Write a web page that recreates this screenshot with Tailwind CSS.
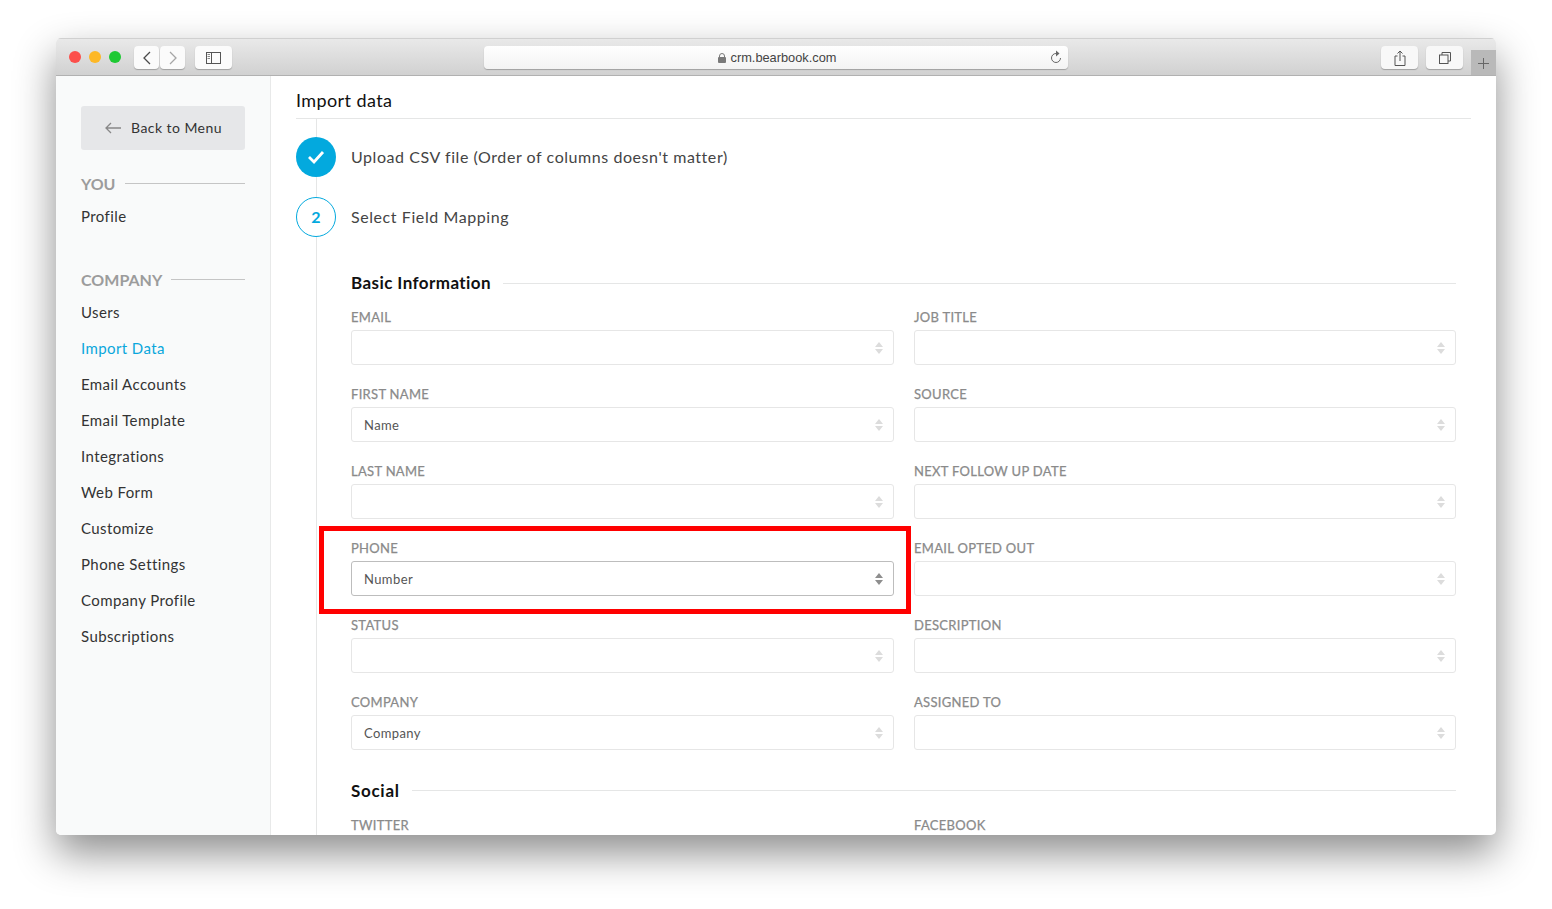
<!DOCTYPE html>
<html lang="en">
<head>
    <meta charset="UTF-8">
    <title>Import data</title>
    <script src="https://cdn.jsdelivr.net/npm/@tailwindcss/browser@4"></script>
</head>
<body class="bg-white h-[909px] overflow-hidden pt-[38px] pl-[56px] font-['Lato',sans-serif]">
<div class="w-[1440px] h-[797px] rounded-[5px] overflow-hidden flex flex-col bg-white shadow-[0_18px_40px_rgba(0,0,0,0.45)]">

    <!-- browser toolbar -->
    <div class="h-[38px] shrink-0 flex items-start bg-gradient-to-b from-[#e9e9e9] to-[#d1d1d1] border-t border-t-[#d0d0d0] border-b border-b-[#b1b1b1] pl-[13px]">
        <div class="flex gap-2 mt-[12px]">
            <span class="w-3 h-3 rounded-full bg-[#fc4f4b]"></span>
            <span class="w-3 h-3 rounded-full bg-[#fdb826]"></span>
            <span class="w-3 h-3 rounded-full bg-[#1ec933]"></span>
        </div>
        <div class="flex gap-px ml-[13px] mt-[7px]">
            <div class="w-[25px] h-[23px] rounded-[4px] bg-[#fbfbfb] shadow-[0_1px_1px_rgba(0,0,0,0.25)] flex items-center justify-center">
                <svg width="10" height="14" viewBox="0 0 10 14" fill="none" stroke="#4a4a4a" stroke-width="1.3"><path d="M8 1 2 7l6 6"/></svg>
            </div>
            <div class="w-[25px] h-[23px] rounded-[4px] bg-[#fbfbfb] shadow-[0_1px_1px_rgba(0,0,0,0.25)] flex items-center justify-center">
                <svg width="10" height="14" viewBox="0 0 10 14" fill="none" stroke="#a6a6a6" stroke-width="1.3"><path d="m2 1 6 6-6 6"/></svg>
            </div>
        </div>
        <div class="w-[37px] h-[23px] ml-[10px] mt-[7px] rounded-[4px] bg-[#fbfbfb] shadow-[0_1px_1px_rgba(0,0,0,0.25)] flex items-center justify-center">
            <svg width="15" height="12" viewBox="0 0 15 12" fill="none" stroke="#555" stroke-width="1"><rect x="0.5" y="0.5" width="14" height="11"/><path d="M5.5 0.5v11"/><path d="M1.5 2.5h2.5M1.5 4.5h2.5M1.5 6.5h2.5" stroke="#888"/></svg>
        </div>
        <div class="w-[584px] h-[23px] ml-[252px] mt-[7px] rounded-[4px] bg-gradient-to-b from-[#ffffff] to-[#f3f3f3] shadow-[0_1px_1px_rgba(0,0,0,0.25)] flex items-center justify-center relative">
            <svg width="8" height="10" viewBox="0 0 8 10" fill="#7a7a7a" class="mr-[5px] ml-[2px]"><rect y="4" width="8" height="6" rx="1"/><path d="M1.5 4.5V3a2.5 2.5 0 0 1 5 0v1.500" fill="none" stroke="#7a7a7a" stroke-width="1"/></svg>
            <span class="text-[12.8px] leading-none pt-px text-[#444] font-['Liberation_Sans',sans-serif]">crm.bearbook.com</span>
            <svg width="12" height="14" viewBox="0 0 12 14" fill="none" stroke="#666" stroke-width="1" class="absolute right-[6px] top-[4px]"><path d="M6 3.500A4.500 4.500 0 1 0 10.500 8"/><path d="M6 0.500 9.500 3.500 6 6.500z" fill="#666" stroke="none"/></svg>
        </div>
        <div class="w-[37px] h-[23px] ml-[313px] mt-[7px] rounded-[4px] bg-[#f8f8f8] shadow-[0_1px_1px_rgba(0,0,0,0.25)] flex items-center justify-center">
            <svg width="12" height="16" viewBox="0 0 12 16" fill="none" stroke="#555" stroke-width="1"><path d="M3.500 6H1v9.500h10V6H8.500"/><path d="M6 11V1M3.500 3.500 6 1l2.500 2.500"/></svg>
        </div>
        <div class="w-[37px] h-[23px] ml-2 mt-[7px] rounded-[4px] bg-[#f8f8f8] shadow-[0_1px_1px_rgba(0,0,0,0.25)] flex items-center justify-center">
            <svg width="12" height="12" viewBox="0 0 12 12" fill="none" stroke="#555" stroke-width="1"><rect x="0.500" y="3" width="8.500" height="8.500"/><path d="M3 3V0.500h8.500V9H9"/></svg>
        </div>
        <div class="w-[25px] h-[25px] ml-2 mt-[11px] pt-px bg-[#b9b9b9] flex items-center justify-center">
            <svg width="11" height="11" viewBox="0 0 11 11" stroke="#666" stroke-width="1"><path d="M5.500 0v11M0 5.500h11"/></svg>
        </div>
    </div>

    <div class="flex flex-1 min-h-0">
        <!-- sidebar -->
        <aside class="w-[215px] shrink-0 bg-[#f9fafa] border-r border-[#e8e9e9] px-[25px] pt-[30px] text-[15px] tracking-[0.4px] text-[#333]">
            <div class="w-[164px] h-[44px] rounded-[3px] bg-[#e6e7e9] flex items-center pl-[24px] pb-[2px] gap-[10px] text-[14px] tracking-[0.45px] text-[#333]">
                <svg class="mt-[2px]" width="16" height="12" viewBox="0 0 16 12" fill="none" stroke="#888" stroke-width="1.3"><path d="M16 6H1M6 1 1 6l5 5"/></svg>
                Back to Menu
            </div>
            <div class="flex items-center gap-[9px] mt-[24px] h-[20px] text-[#9c9c9c] text-[16px] tracking-normal">
                <span class="font-bold">YOU</span><span class="flex-1 border-t border-[#c5c5c5] mb-[2px]"></span>
            </div>
            <div class="h-[36px] mt-[4px] flex items-center">Profile</div>
            <div class="flex items-center gap-[9px] mt-[36px] h-[20px] text-[#9c9c9c] text-[16px] tracking-normal">
                <span class="font-bold">COMPANY</span><span class="flex-1 border-t border-[#c5c5c5] mb-[2px]"></span>
            </div>
            <nav class="flex flex-col mt-[4px]">
                <a class="h-[36px] flex items-center">Users</a>
                <a class="h-[36px] flex items-center text-[#0aa7dc]">Import Data</a>
                <a class="h-[36px] flex items-center">Email Accounts</a>
                <a class="h-[36px] flex items-center">Email Template</a>
                <a class="h-[36px] flex items-center">Integrations</a>
                <a class="h-[36px] flex items-center">Web Form</a>
                <a class="h-[36px] flex items-center">Customize</a>
                <a class="h-[36px] flex items-center">Phone Settings</a>
                <a class="h-[36px] flex items-center">Company Profile</a>
                <a class="h-[36px] flex items-center">Subscriptions</a>
            </nav>
        </aside>

        <!-- main -->
        <main class="flex-1 min-w-0 overflow-hidden pl-[25px] pr-[25px] relative">
            <h1 class="h-[43px] pt-[14px] text-[18px] leading-[20px] tracking-[0.4px] text-[#111] border-b border-[#e5e6e6]">Import data</h1>
            <div class="ml-[20px] border-l border-[#e5e6e6] pl-[34px] pr-[15px] pt-[18px] h-[800px]">
                <div class="flex items-center -ml-[55px] gap-[15px]">
                    <span class="w-[40px] h-[40px] rounded-full bg-[#03a9de] flex items-center justify-center">
                        <svg width="18" height="14" viewBox="0 0 18 14" fill="none" stroke="#fff" stroke-width="2.800"><path d="m2 7 5 5 9-10"/></svg>
                    </span>
                    <span class="text-[16px] tracking-[0.56px] text-[#444]">Upload CSV file (Order of columns doesn't matter)</span>
                </div>
                <div class="flex items-center -ml-[55px] gap-[15px] mt-[20px]">
                    <span class="w-[40px] h-[40px] rounded-full bg-white border border-[#03a9de] flex items-center justify-center text-[#03a9de] text-[16px] font-bold">2</span>
                    <span class="text-[16px] tracking-[0.58px] text-[#444]">Select Field Mapping</span>
                </div>

                <div class="flex items-center gap-[12px] mt-[36px] h-[20px]">
                    <h2 class="text-[17px] font-bold tracking-[0.42px] text-[#111]">Basic Information</h2><span class="flex-1 border-t border-[#e5e6e6]"></span>
                </div>
                <div class="grid grid-cols-[543px_542px] gap-x-[20px] gap-y-[22px] mt-[17px]">
                    <div><label class="block h-5 text-[13px] leading-[14px] tracking-[0.3px] [-webkit-text-stroke:0.25px_#8a8a8a] text-[#8a8a8a]">EMAIL</label><div class="h-[35px] rounded-[3px] border border-[#e6e6e6] flex items-center justify-between pl-3 pr-[10px] text-[13px] tracking-[0.4px] text-[#555]"><span class="pt-[2px]"></span><svg width="8" height="12" viewBox="0 0 8 12" fill="#dcdcdc"><path d="M4 0 8 5H0zM4 12 0 7h8z"/></svg></div></div>
                    <div><label class="block h-5 text-[13px] leading-[14px] tracking-[0.3px] [-webkit-text-stroke:0.25px_#8a8a8a] text-[#8a8a8a]">JOB TITLE</label><div class="h-[35px] rounded-[3px] border border-[#e6e6e6] flex items-center justify-between pl-3 pr-[10px] text-[13px] tracking-[0.4px] text-[#555]"><span class="pt-[2px]"></span><svg width="8" height="12" viewBox="0 0 8 12" fill="#dcdcdc"><path d="M4 0 8 5H0zM4 12 0 7h8z"/></svg></div></div>
                    <div><label class="block h-5 text-[13px] leading-[14px] tracking-[0.3px] [-webkit-text-stroke:0.25px_#8a8a8a] text-[#8a8a8a]">FIRST NAME</label><div class="h-[35px] rounded-[3px] border border-[#e6e6e6] flex items-center justify-between pl-3 pr-[10px] text-[13px] tracking-[0.4px] text-[#555]"><span class="pt-[2px]">Name</span><svg width="8" height="12" viewBox="0 0 8 12" fill="#dcdcdc"><path d="M4 0 8 5H0zM4 12 0 7h8z"/></svg></div></div>
                    <div><label class="block h-5 text-[13px] leading-[14px] tracking-[0.3px] [-webkit-text-stroke:0.25px_#8a8a8a] text-[#8a8a8a]">SOURCE</label><div class="h-[35px] rounded-[3px] border border-[#e6e6e6] flex items-center justify-between pl-3 pr-[10px] text-[13px] tracking-[0.4px] text-[#555]"><span class="pt-[2px]"></span><svg width="8" height="12" viewBox="0 0 8 12" fill="#dcdcdc"><path d="M4 0 8 5H0zM4 12 0 7h8z"/></svg></div></div>
                    <div><label class="block h-5 text-[13px] leading-[14px] tracking-[0.3px] [-webkit-text-stroke:0.25px_#8a8a8a] text-[#8a8a8a]">LAST NAME</label><div class="h-[35px] rounded-[3px] border border-[#e6e6e6] flex items-center justify-between pl-3 pr-[10px] text-[13px] tracking-[0.4px] text-[#555]"><span class="pt-[2px]"></span><svg width="8" height="12" viewBox="0 0 8 12" fill="#dcdcdc"><path d="M4 0 8 5H0zM4 12 0 7h8z"/></svg></div></div>
                    <div><label class="block h-5 text-[13px] leading-[14px] tracking-[0.3px] [-webkit-text-stroke:0.25px_#8a8a8a] text-[#8a8a8a]">NEXT FOLLOW UP DATE</label><div class="h-[35px] rounded-[3px] border border-[#e6e6e6] flex items-center justify-between pl-3 pr-[10px] text-[13px] tracking-[0.4px] text-[#555]"><span class="pt-[2px]"></span><svg width="8" height="12" viewBox="0 0 8 12" fill="#dcdcdc"><path d="M4 0 8 5H0zM4 12 0 7h8z"/></svg></div></div>
                    <div><label class="block h-5 text-[13px] leading-[14px] tracking-[0.3px] [-webkit-text-stroke:0.25px_#8a8a8a] text-[#8a8a8a]">PHONE</label><div class="h-[35px] rounded-[3px] border border-[#bdbdbd] flex items-center justify-between pl-3 pr-[10px] text-[13px] tracking-[0.4px] text-[#555]"><span class="pt-[2px]">Number</span><svg width="8" height="12" viewBox="0 0 8 12" fill="#8e8e8e"><path d="M4 0 8 5H0zM4 12 0 7h8z"/></svg></div></div>
                    <div><label class="block h-5 text-[13px] leading-[14px] tracking-[0.3px] [-webkit-text-stroke:0.25px_#8a8a8a] text-[#8a8a8a]">EMAIL OPTED OUT</label><div class="h-[35px] rounded-[3px] border border-[#e6e6e6] flex items-center justify-between pl-3 pr-[10px] text-[13px] tracking-[0.4px] text-[#555]"><span class="pt-[2px]"></span><svg width="8" height="12" viewBox="0 0 8 12" fill="#dcdcdc"><path d="M4 0 8 5H0zM4 12 0 7h8z"/></svg></div></div>
                    <div><label class="block h-5 text-[13px] leading-[14px] tracking-[0.3px] [-webkit-text-stroke:0.25px_#8a8a8a] text-[#8a8a8a]">STATUS</label><div class="h-[35px] rounded-[3px] border border-[#e6e6e6] flex items-center justify-between pl-3 pr-[10px] text-[13px] tracking-[0.4px] text-[#555]"><span class="pt-[2px]"></span><svg width="8" height="12" viewBox="0 0 8 12" fill="#dcdcdc"><path d="M4 0 8 5H0zM4 12 0 7h8z"/></svg></div></div>
                    <div><label class="block h-5 text-[13px] leading-[14px] tracking-[0.3px] [-webkit-text-stroke:0.25px_#8a8a8a] text-[#8a8a8a]">DESCRIPTION</label><div class="h-[35px] rounded-[3px] border border-[#e6e6e6] flex items-center justify-between pl-3 pr-[10px] text-[13px] tracking-[0.4px] text-[#555]"><span class="pt-[2px]"></span><svg width="8" height="12" viewBox="0 0 8 12" fill="#dcdcdc"><path d="M4 0 8 5H0zM4 12 0 7h8z"/></svg></div></div>
                    <div><label class="block h-5 text-[13px] leading-[14px] tracking-[0.3px] [-webkit-text-stroke:0.25px_#8a8a8a] text-[#8a8a8a]">COMPANY</label><div class="h-[35px] rounded-[3px] border border-[#e6e6e6] flex items-center justify-between pl-3 pr-[10px] text-[13px] tracking-[0.4px] text-[#555]"><span class="pt-[2px]">Company</span><svg width="8" height="12" viewBox="0 0 8 12" fill="#dcdcdc"><path d="M4 0 8 5H0zM4 12 0 7h8z"/></svg></div></div>
                    <div><label class="block h-5 text-[13px] leading-[14px] tracking-[0.3px] [-webkit-text-stroke:0.25px_#8a8a8a] text-[#8a8a8a]">ASSIGNED TO</label><div class="h-[35px] rounded-[3px] border border-[#e6e6e6] flex items-center justify-between pl-3 pr-[10px] text-[13px] tracking-[0.4px] text-[#555]"><span class="pt-[2px]"></span><svg width="8" height="12" viewBox="0 0 8 12" fill="#dcdcdc"><path d="M4 0 8 5H0zM4 12 0 7h8z"/></svg></div></div>
                </div>

                <div class="flex items-center gap-[12px] mt-[31px] h-[20px]">
                    <h2 class="text-[17px] font-bold tracking-[0.7px] text-[#111]">Social</h2><span class="flex-1 border-t border-[#e5e6e6] mb-[2px]"></span>
                </div>
                <div class="grid grid-cols-[543px_542px] gap-x-[20px] mt-[17px]">
                    <label class="block h-5 text-[13px] leading-[14px] tracking-[0.3px] [-webkit-text-stroke:0.25px_#8a8a8a] text-[#8a8a8a]">TWITTER</label>
                    <label class="block h-5 text-[13px] leading-[14px] tracking-[0.3px] [-webkit-text-stroke:0.25px_#8a8a8a] text-[#8a8a8a]">FACEBOOK</label>
                </div>
            </div>
            <!-- annotation drawn over the phone field -->
            <div class="absolute left-[48px] top-[450px] w-[592px] h-[88px] border-[5px] border-[#ff0000]"></div>
        </main>
    </div>
</div>
</body>
</html>
